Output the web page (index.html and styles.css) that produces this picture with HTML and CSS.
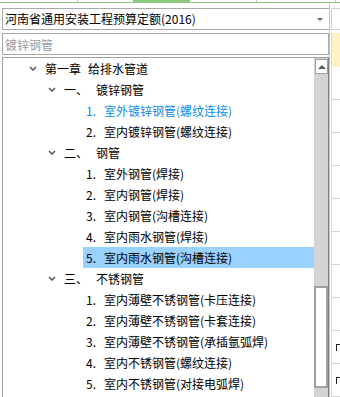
FILE: index.html
```html
<!DOCTYPE html>
<html lang="zh-CN">
<head>
    <meta charset="UTF-8">
    <meta name="viewport" content="width=device-width, initial-scale=1.0">
    <title>定额选择</title>
    <link rel="stylesheet" href="styles.css">
</head>
<body>

<div class="tabs">
    <span class="tab tab-a"></span>
    <span class="tab tab-b"></span>
    <span class="tab tab-on"></span>
    <span class="tab tab-c"></span>
    <span class="tab tab-d"></span>
</div>

<div class="page">
    <div class="left">
        <div class="select">
            <span class="select-text">河南省通用安装工程预算定额(2016)</span>
            <span class="caret"></span>
        </div>
        <input class="search" type="text" placeholder="镀锌钢管">

        <div class="tree">
            <div class="tree-body">
                <div class="row lvl0">
                    <svg class="chev" viewBox="0 0 8 5"><path d="M1 1l3 3 3-3"/></svg>
                    <span class="label">第一章</span><span class="name">给排水管道</span>
                </div>
                <div class="row lvl1">
                    <svg class="chev" viewBox="0 0 8 5"><path d="M1 1l3 3 3-3"/></svg>
                    <span class="label">一、</span><span class="name wide">镀锌钢管</span>
                </div>
                <div class="row leaf"><div class="item active"><span class="num">1.</span>室外镀锌钢管(螺纹连接)</div></div>
                <div class="row leaf"><div class="item"><span class="num">2.</span>室内镀锌钢管(螺纹连接)</div></div>
                <div class="row lvl1">
                    <svg class="chev" viewBox="0 0 8 5"><path d="M1 1l3 3 3-3"/></svg>
                    <span class="label">二、</span><span class="name wide">钢管</span>
                </div>
                <div class="row leaf"><div class="item"><span class="num">1.</span>室外钢管(焊接)</div></div>
                <div class="row leaf"><div class="item"><span class="num">2.</span>室内钢管(焊接)</div></div>
                <div class="row leaf"><div class="item"><span class="num">3.</span>室内钢管(沟槽连接)</div></div>
                <div class="row leaf"><div class="item"><span class="num">4.</span>室内雨水钢管(焊接)</div></div>
                <div class="row leaf"><div class="item selected"><span class="num">5.</span>室内雨水钢管(沟槽连接)</div></div>
                <div class="row lvl1">
                    <svg class="chev" viewBox="0 0 8 5"><path d="M1 1l3 3 3-3"/></svg>
                    <span class="label">三、</span><span class="name wide">不锈钢管</span>
                </div>
                <div class="row leaf"><div class="item"><span class="num">1.</span>室内薄壁不锈钢管(卡压连接)</div></div>
                <div class="row leaf"><div class="item"><span class="num">2.</span>室内薄壁不锈钢管(卡套连接)</div></div>
                <div class="row leaf"><div class="item"><span class="num">3.</span>室内薄壁不锈钢管(承插氩弧焊)</div></div>
                <div class="row leaf"><div class="item"><span class="num">4.</span>室内不锈钢管(螺纹连接)</div></div>
                <div class="row leaf"><div class="item"><span class="num">5.</span>室内不锈钢管(对接电弧焊)</div></div>
            </div>
            <div class="scroll">
                <div class="sb-up"><span class="sb-arrow"></span></div>
                <div class="sb-thumb"></div>
            </div>
        </div>
    </div>

    <div class="side">
        <div class="cell cell-top"></div>
        <div class="cell cell-yellow"></div>
        <div class="cell"></div>
        <div class="cell"></div>
        <div class="cell"></div>
        <div class="cell"></div>
        <div class="cell"></div>
        <div class="cell"></div>
        <div class="cell"></div>
        <div class="cell"></div>
        <div class="cell"><span class="peek"></span></div>
        <div class="cell"><span class="peek"></span></div>
    </div>
</div>

</body>
</html>
```

FILE: styles.css
```css
body {
    margin: 0;
    width: 340px;
    height: 397px;
    overflow: hidden;
    background-color: #fff;
    font-family: "Noto Sans CJK SC", "Liberation Sans", sans-serif;
    font-size: 12px;
    color: #000;
}

/* top tab strip */
.tabs {
    display: flex;
    height: 3px;
    box-sizing: border-box;
    border-bottom: 1px solid #8cc97a;
}

.tab {
    box-sizing: border-box;
    height: 2px;
}

.tab-a { width: 78px; border-right: 1px solid #a9d99b; }
.tab-b { width: 55px; }
.tab-on { width: 57px; height: 3px; background-color: #8cc97a; }
.tab-c { width: 67px; border-right: 1px solid #a9d99b; }
.tab-d { width: 79px; border-right: 1px solid #a9d99b; }

.page {
    display: flex;
}

.left {
    width: 327px;
    margin-left: 2px;
    padding-top: 5px;
}

/* dropdown */
.select {
    display: flex;
    align-items: center;
    justify-content: space-between;
    width: 328px;
    height: 22px;
    box-sizing: border-box;
    border: 1px solid #a9a9a9;
    padding: 0 6px 0 2px;
    line-height: 20px;
}

.caret {
    width: 0;
    height: 0;
    border-left: 3px solid transparent;
    border-right: 3px solid transparent;
    border-top: 3px solid #666;
}

.search {
    display: block;
    width: 327px;
    height: 22px;
    margin: 3px 0 0 0;
    box-sizing: border-box;
    border: 1px solid #a9a9a9;
    padding: 0 2px;
    font-family: inherit;
    font-size: 12px;
    color: #000;
    outline: none;
}

.search::placeholder {
    color: #999;
}

/* tree */
.tree {
    display: flex;
    height: 345px;
    margin-top: 2px;
    border-top: 1px solid #a0a0a0;
    border-left: 1px solid #a0a0a0;
    border-right: 1px solid #7f7f7f;
}

.tree-body {
    flex: 1;
    background-color: #fff;
}

.row {
    display: flex;
    align-items: center;
    height: 21px;
    line-height: 21px;
    white-space: nowrap;
}

.chev {
    width: 8px;
    height: 5px;
    fill: none;
    stroke: #555;
    stroke-width: 1.5;
}

.lvl0 { padding-left: 26px; }
.lvl1 { padding-left: 45px; }
.lvl0 .label,
.lvl1 .label { margin-left: 8px; }

.lvl0 .name { margin-left: 7px; }
.lvl1 .name.wide { margin-left: 8px; }

.leaf { padding-left: 80px; }

.item {
    flex: 1;
    height: 21px;
    padding-left: 3px;
}

.item.active {
    color: #0a8cf0;
}

.item.selected {
    background-color: #99d1ff;
}

.num {
    display: inline-block;
    width: 18px;
}

/* scrollbar */
.scroll {
    width: 14px;
    background-color: #d4d4d4;
}

.sb-up {
    display: flex;
    align-items: center;
    justify-content: center;
    width: 13px;
    height: 15px;
    margin: 1px 0 0 1px;
    box-sizing: border-box;
    border: 1px solid #a0a0a0;
    background-color: #fff;
}

.sb-arrow {
    width: 0;
    height: 0;
    border-left: 4px solid transparent;
    border-right: 4px solid transparent;
    border-bottom: 4px solid #5a5a66;
}

.sb-thumb {
    width: 14px;
    height: 102px;
    margin-top: 212px;
    box-sizing: border-box;
    border: 2px solid #a0a0a0;
    background-color: #fff;
}

/* right strip behind the panel */
.side {
    flex: 1;
    padding-top: 5px;
    border-left: 1px solid #c4c4cc;
}

.cell {
    height: 33px;
    margin-left: 1px;
    box-sizing: border-box;
    border-left: 1px solid #dadada;
    border-bottom: 1px solid #d6d6d6;
    overflow: hidden;
}

.cell-top {
    height: 22px;
    margin-bottom: 3px;
    border: 1px solid #d0d0d0;
}

.cell-yellow {
    height: 34px;
    background-color: #fff2c4;
    border-bottom: none;
}

/* clipped glyph fragment of the table behind */
.peek {
    display: block;
    width: 5px;
    height: 6px;
    margin: 13px 0 0 4px;
    border-top: 1px solid #222;
    border-left: 1px solid #222;
}
```
